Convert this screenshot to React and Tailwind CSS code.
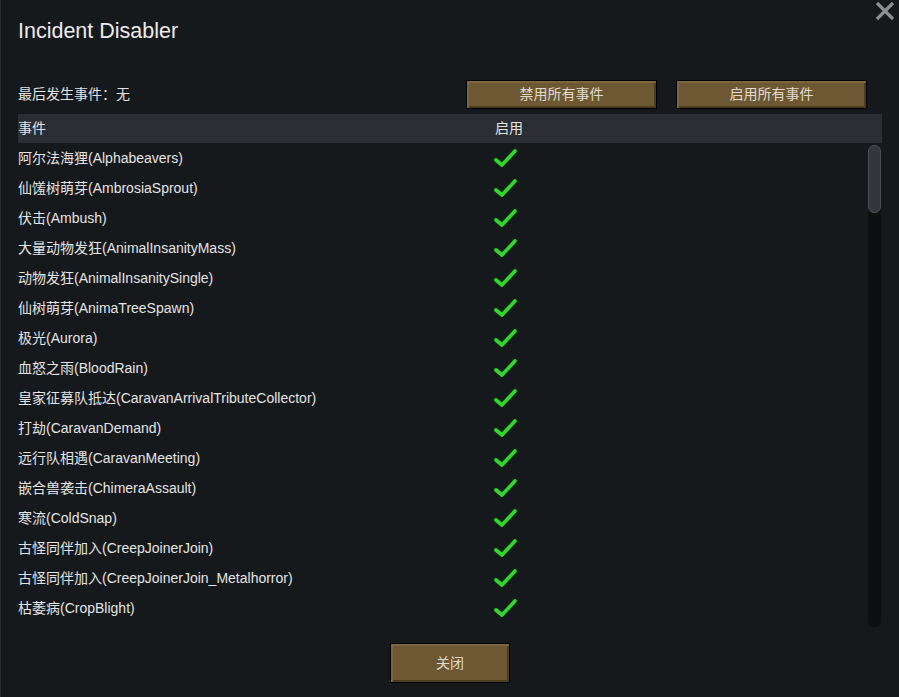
import React from 'react';

const incidents = [
  '阿尔法海狸(Alphabeavers)',
  '仙馐树萌芽(AmbrosiaSprout)',
  '伏击(Ambush)',
  '大量动物发狂(AnimalInsanityMass)',
  '动物发狂(AnimalInsanitySingle)',
  '仙树萌芽(AnimaTreeSpawn)',
  '极光(Aurora)',
  '血怒之雨(BloodRain)',
  '皇家征募队抵达(CaravanArrivalTributeCollector)',
  '打劫(CaravanDemand)',
  '远行队相遇(CaravanMeeting)',
  '嵌合兽袭击(ChimeraAssault)',
  '寒流(ColdSnap)',
  '古怪同伴加入(CreepJoinerJoin)',
  '古怪同伴加入(CreepJoinerJoin_Metalhorror)',
  '枯萎病(CropBlight)',
];

const Check = () => (
  <svg width="26" height="22" viewBox="0 0 26 22">
    <polyline points="3,13 9,18 22,4" fill="none" stroke="#0b2a0b" strokeWidth="6" strokeLinecap="round" strokeLinejoin="round" />
    <polyline points="3,13 9,18 22,4" fill="none" stroke="#35d435" strokeWidth="3.6" strokeLinecap="round" strokeLinejoin="round" />
  </svg>
);

const Button = ({ children, className }) => (
  <button
    className={`flex items-center justify-center border border-black bg-[#6d5833] text-[14px] text-[#e2dccd] shadow-[inset_2px_2px_0_#7c6640,inset_-2px_-2px_0_#4c3d22] ${className}`}
  >
    {children}
  </button>
);

const App = () => {
  return (
    <div
      className="relative flex h-[697px] w-[899px] flex-col border-l border-[#2a2d31] bg-[#16191c] pl-[17px] pr-[17px] text-[#e4e4e4]"
      style={{ fontFamily: '"Liberation Sans", "Noto Sans CJK SC", sans-serif' }}
    >
      <button className="absolute right-[3px] top-[1px] text-[#8c8e90]">
        <svg width="22" height="20" viewBox="0 0 22 20">
          <path d="M3 2 L19 18 M19 2 L3 18" stroke="currentColor" strokeWidth="3.2" />
        </svg>
      </button>

      <h1 className="mt-[17px] text-[21.5px] leading-[28px] text-[#ececec]">Incident Disabler</h1>

      <div className="mt-[35px] flex h-[29px] items-center">
        <span className="text-[14px]">最后发生事件：无</span>
        <div className="ml-auto mr-[15px] flex gap-[19px]">
          <Button className="h-[29px] w-[191px]">禁用所有事件</Button>
          <Button className="h-[29px] w-[191px]">启用所有事件</Button>
        </div>
      </div>

      <div className="mt-[5px] flex h-[29px] items-center bg-[#2b2e32] text-[14px]">
        <span className="w-[477px]">事件</span>
        <span>启用</span>
      </div>

      <div className="flex h-[485px]">
        <ul className="flex-1">
          {incidents.map((name) => (
            <li key={name} className="flex h-[30px] items-center text-[14px]">
              <span className="w-[475px] whitespace-nowrap">{name}</span>
              <Check />
            </li>
          ))}
        </ul>
        <div className="mb-[1px] mr-[1px] mt-[2px] w-[13px] rounded-[6px] bg-[#0d0f11]">
          <div className="h-[68px] rounded-[6px] border border-[#4a4d51] bg-[#33363a]" />
        </div>
      </div>

      <div className="mt-[15px] flex justify-center">
        <Button className="h-[40px] w-[120px]">关闭</Button>
      </div>
    </div>
  );
};

export default App;
